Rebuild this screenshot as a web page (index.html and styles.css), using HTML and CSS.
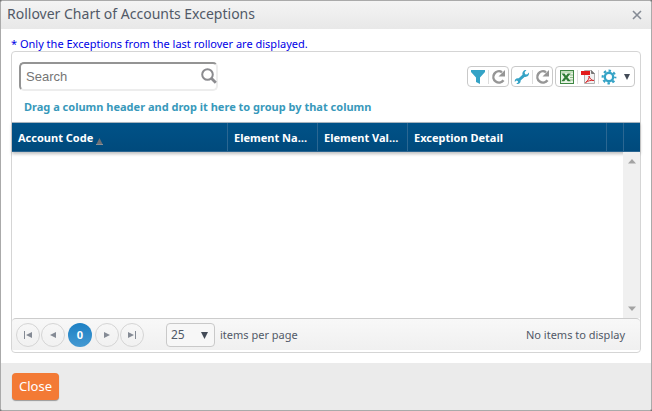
FILE: index.html
```html
<!DOCTYPE html>
<html lang="en">
<head>
    <meta charset="UTF-8">
    <meta name="viewport" content="width=device-width, initial-scale=1.0">
    <title>Rollover Chart of Accounts Exceptions</title>
    <link rel="stylesheet" href="styles.css">
</head>

<body>
    <div class="dialog" role="dialog" aria-labelledby="dialogTitle">
        <header class="dialog-header">
            <h1 id="dialogTitle">Rollover Chart of Accounts Exceptions</h1>
            <button class="dialog-x" aria-label="Close dialog">
                <svg width="10" height="10" viewBox="0 0 10 10"><path d="M1 1l8 8M9 1L1 9" stroke="#858b95" stroke-width="1.6" fill="none"/></svg>
            </button>
        </header>

        <main class="dialog-body">
            <p class="note">* Only the Exceptions from the last rollover are displayed.</p>

            <div class="grid">
                <div class="toolbar">
                    <div class="search">
                        <input type="text" placeholder="Search" aria-label="Search">
                        <svg class="search-icon" width="16" height="16" viewBox="0 0 16 16"><circle cx="6.500" cy="6.500" r="5.300" stroke="#8b8b8f" stroke-width="2" fill="none"/><path d="M10.300 10.300l4.500 4.500" stroke="#8b8b8f" stroke-width="2.800"/></svg>
                    </div>
                    <div class="tools">
                        <div class="tool-group">
                            <button aria-label="Filter">
                                <svg width="16" height="16" viewBox="0 0 16 16"><path d="M1 1h14v2L10 8.500V15l-4-2V8.500L1 3z" fill="#35a3c6"/></svg>
                            </button>
                            <button aria-label="Reset filter">
                                <svg width="16" height="16" viewBox="0 0 16 16"><path d="M12.500 11.200A5.600 5.600 0 1 1 11 3.200" fill="none" stroke="#969696" stroke-width="2.500"/><path d="M14 1v6.500H7.500z" fill="#969696"/></svg>
                            </button>
                        </div>
                        <div class="tool-group">
                            <button aria-label="Settings">
                                <svg width="16" height="16" viewBox="0 0 16 16"><path d="M12.400 1L10.600 3.200l.5 2 2 .4L15 3.500c.4 2.700-1.700 4.800-4.500 4.400L6.600 11.400c.4 2.500-1.800 4.100-4.300 3.300l1.900-1.500-.5-1.200-1.400-.4L.8 13C.4 10.600 2 8.800 4.700 9.300L8.500 5.700C8 3 9.700.8 12.400 1z" fill="#35a3c6"/></svg>
                            </button>
                            <button aria-label="Reset settings">
                                <svg width="16" height="16" viewBox="0 0 16 16"><path d="M12.500 11.200A5.600 5.600 0 1 1 11 3.200" fill="none" stroke="#969696" stroke-width="2.500"/><path d="M14 1v6.500H7.500z" fill="#969696"/></svg>
                            </button>
                        </div>
                        <div class="tool-group tool-group-wide">
                            <button aria-label="Export to Excel">
                                <svg width="16" height="16" viewBox="0 0 16 16"><rect x="1.500" y="1.500" width="13" height="13" fill="#e9f4e6" stroke="#3e8743"/><path d="M2 2h12v2H2z" fill="#c3dfbd"/><path d="M11 6h3M11 8.500h3M11 11h3" stroke="#8dbb86"/><path d="M2.500 4.500h3L7 6.800l1.700-2.300h3L8.500 8.300l3.300 4H8.700L7 10l-1.700 2.300h-3l3.200-4z" fill="#2f7d35"/></svg>
                            </button>
                            <button aria-label="Export to PDF">
                                <svg width="16" height="16" viewBox="0 0 16 16"><path d="M4.500 1.500h7l3 3v10h-10z" fill="#f1f1f1" stroke="#b0b0b0"/><path d="M11.500 1.500v3h3" fill="#777" stroke="#777"/><path d="M1 2h9v4H1z" fill="#e21b1b"/><path d="M5.500 13.500C8 12 9.500 9 9 7c1 3 2.500 4.500 5 4.500-3-.5-6 .3-8.500 2z" fill="none" stroke="#d8262a"/></svg>
                            </button>
                            <button aria-label="Options">
                                <svg width="16" height="16" viewBox="0 0 16 16"><circle cx="8" cy="8" r="4.200" fill="none" stroke="#35a3c6" stroke-width="2.400"/><circle cx="8" cy="8" r="6.300" fill="none" stroke="#35a3c6" stroke-width="2.200" stroke-dasharray="2.470 2.478" stroke-dashoffset="1.200"/></svg>
                            </button>
                            <button class="tool-caret" aria-label="More options">
                                <svg width="8" height="16" viewBox="0 0 8 16"><path d="M1 5h6L4 11z" fill="#434b57"/></svg>
                            </button>
                        </div>
                    </div>
                </div>

                <div class="group-hint">Drag a column header and drop it here to group by that column</div>

                <table class="columns">
                    <colgroup>
                        <col class="col-code">
                        <col class="col-element">
                        <col class="col-element">
                        <col>
                        <col class="col-small">
                        <col class="col-small">
                    </colgroup>
                    <thead>
                        <tr>
                            <th scope="col">Account Code <svg class="sort" width="7" height="7" viewBox="0 0 7 7"><path d="M3.500 0L6.500 6h-6z" fill="#6d7075"/><path d="M0 6.500h7" stroke="#8a8e94"/></svg></th>
                            <th scope="col">Element Name</th>
                            <th scope="col">Element Value</th>
                            <th scope="col">Exception Detail</th>
                            <td></td>
                            <td></td>
                        </tr>
                    </thead>
                </table>

                <div class="rows">
                    <div class="scrollbar">
                        <svg width="8" height="5" viewBox="0 0 8 5"><path d="M4 0l4 4.500H0z" fill="#a3a3a3"/></svg>
                        <svg width="8" height="5" viewBox="0 0 8 5"><path d="M4 5L0 .5h8z" fill="#a3a3a3"/></svg>
                    </div>
                </div>

                <div class="pager">
                    <div class="pages">
                        <button aria-label="First page">
                            <svg width="8" height="8" viewBox="0 0 8 8"><path d="M0 0h1v8H0zM8 1v6L2 4z" fill="#858b95"/></svg>
                        </button>
                        <button aria-label="Previous page">
                            <svg width="8" height="8" viewBox="0 0 8 8"><path d="M7 1v6L1 4z" fill="#858b95"/></svg>
                        </button>
                        <button class="current">0</button>
                        <button aria-label="Next page">
                            <svg width="8" height="8" viewBox="0 0 8 8"><path d="M1 1v6l6-3z" fill="#858b95"/></svg>
                        </button>
                        <button aria-label="Last page">
                            <svg width="8" height="8" viewBox="0 0 8 8"><path d="M7 0h1v8H7zM0 1v6l6-3z" fill="#858b95"/></svg>
                        </button>
                    </div>
                    <div class="page-size">
                        <select id="pageSize">
                            <option>25</option>
                            <option>50</option>
                            <option>100</option>
                        </select>
                        <svg class="select-arrow" width="7" height="7" viewBox="0 0 7 7"><path d="M0 0h7L3.500 7z" fill="#434b57"/></svg>
                    </div>
                    <label for="pageSize">items per page</label>
                    <span class="pager-info">No items to display</span>
                </div>
            </div>
        </main>

        <footer class="dialog-footer">
            <button class="close-button">Close</button>
        </footer>
    </div>
</body>

</html>
```

FILE: styles.css
```css
* {
    box-sizing: border-box;
}

body {
    margin: 0;
    background: #777;
    font-family: 'Noto Sans', 'Open Sans', sans-serif;
    font-size: 11px;
    color: #515967;
}

button {
    display: flex;
    align-items: center;
    justify-content: center;
    padding: 0;
    border: none;
    background: none;
    font-family: inherit;
    cursor: pointer;
}

.dialog {
    display: flex;
    flex-direction: column;
    min-height: 100vh;
    border: 1px solid #aaa;
    border-radius: 3px;
    background: #fff;
    overflow: hidden;
}

.dialog-header {
    display: flex;
    align-items: center;
    justify-content: space-between;
    height: 28px;
    padding: 0 9px 0 6px;
    background: linear-gradient(#f4f4f4, #e8e8e8);
}

h1 {
    margin: 0;
    padding-bottom: 2px;
    font-size: 14px;
    line-height: 24px;
    font-weight: normal;
}

.dialog-body {
    display: flex;
    flex-direction: column;
    flex: 1;
    padding: 8px 10px 10px;
}

.note {
    margin: 0;
    line-height: 14px;
    color: #0000e6;
}

.grid {
    display: flex;
    flex-direction: column;
    flex: 1;
    padding-bottom: 2px;
    border: 1px solid #d5d5d5;
    border-radius: 4px;
}

.toolbar {
    display: flex;
    align-items: center;
    justify-content: space-between;
    padding: 10px 5px 0 7px;
}

.search {
    position: relative;
}

.search input {
    display: block;
    width: 199px;
    height: 29px;
    padding: 0 24px 0 5px;
    border: 2px solid;
    border-color: #949494 #ededed #ededed #949494;
    border-radius: 5px;
    background: #fff;
    font-family: 'Liberation Sans', Arial, sans-serif;
    font-size: 13px;
}

.search input::placeholder {
    color: #757575;
}

.search-icon {
    position: absolute;
    top: 6px;
    right: 1px;
}

.tools {
    display: flex;
    gap: 2px;
}

.tool-group {
    display: flex;
    align-items: center;
    height: 21px;
    border: 1px solid #c9c9c9;
    border-radius: 4px;
}

.tool-group button {
    width: 20px;
    height: 14px;
}

.tool-group button + button {
    border-left: 1px solid #ddd;
}

.tool-group-wide button {
    width: 21px;
}

.tool-group .tool-caret {
    width: 15px;
    border-left: none;
}

.group-hint {
    padding: 7px 12px 6px;
    line-height: 18px;
    font-weight: bold;
    color: #3899bb;
}

.columns {
    width: 100%;
    table-layout: fixed;
    border-collapse: separate;
    border-spacing: 0;
    border-top: 1px solid #a6b3bd;
    border-bottom: 1px solid #2a6591;
    background: linear-gradient(#005288, #004a7c);
    box-shadow: 0 2px 3px rgba(0, 0, 0, 0.25);
    color: #fff;
}

.columns th,
.columns td {
    height: 28px;
    padding: 0 6px;
    border-left: 1px solid #2b6792;
    overflow: hidden;
    text-align: left;
    text-overflow: ellipsis;
    white-space: nowrap;
}

.columns th:first-child {
    border-left: none;
}

.col-code {
    width: 215px;
}

.col-element {
    width: 90px;
}

.col-small {
    width: 17px;
}

.sort {
    vertical-align: -3px;
}

.rows {
    display: flex;
    flex: 1;
    justify-content: flex-end;
    min-height: 100px;
}

.scrollbar {
    display: flex;
    flex-direction: column;
    align-items: center;
    justify-content: space-between;
    width: 17px;
    padding: 7px 0;
    background: #f0f0f0;
    /* sits above the shadow of the header row */
    z-index: 1;
}

.pager {
    display: flex;
    align-items: center;
    height: 32px;
    padding: 0 15px 0 4px;
    border-top: 1px solid #ccc;
    border-radius: 4px 4px 0 0;
    background: linear-gradient(#f8f8f8, #f0f0f0);
}

.pages {
    display: flex;
    gap: 1px;
}

.pages button {
    width: 24px;
    height: 24px;
    border: 1px solid #d5d5d5;
    border-radius: 50%;
}

.pages .current {
    margin: 0 2px;
    border: none;
    background: linear-gradient(#1c80c4, #4499d2);
    color: #fff;
    font-size: 11px;
    font-weight: bold;
}

.page-size {
    position: relative;
    margin: 0 5px 0 22px;
}

.page-size select {
    display: block;
    width: 49px;
    height: 24px;
    padding: 0 4px;
    border: 1px solid #c9c9c9;
    border-radius: 4px;
    background: #f7f7f7;
    appearance: none;
    font-family: inherit;
    font-size: 12px;
    color: inherit;
}

.select-arrow {
    position: absolute;
    top: 9px;
    right: 7px;
    pointer-events: none;
}

.pager-info {
    margin-left: auto;
}

.dialog-footer {
    height: 47px;
    padding: 10px 11px;
    background: #ebebeb;
}

.close-button {
    height: 27px;
    padding: 0 7px 2px;
    border-radius: 4px;
    background: #f37a35;
    box-shadow: 0 1px 1px #999;
    color: #fff;
    font-size: 13px;
}
```
